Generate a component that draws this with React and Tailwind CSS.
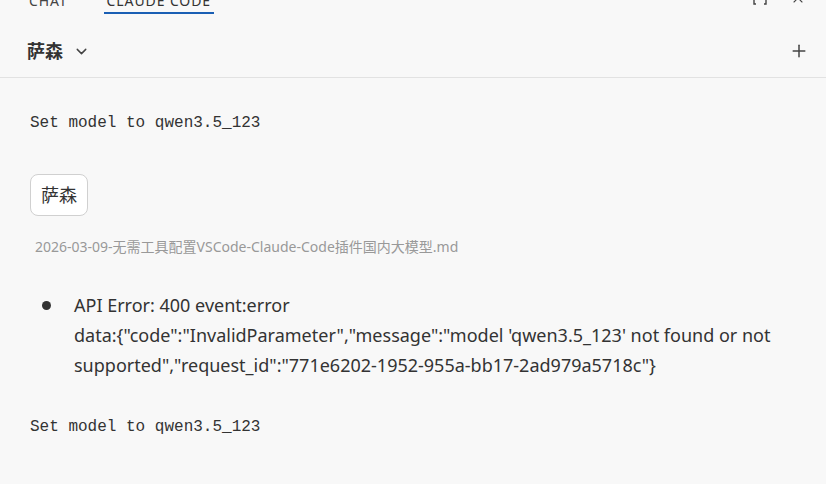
import React from 'react'
import { ChevronDown, Plus, X } from 'lucide-react'

const mono = { fontFamily: '"Liberation Mono", "DejaVu Sans Mono", monospace' }

const Expand = () => (
  <svg width="16" height="16" viewBox="0 0 16 16" fill="none" stroke="currentColor" strokeWidth="1.4">
    <path d="M4 2H2v12h2M12 2h2v12h-2" />
  </svg>
)

export default function App() {
  return (
    <div
      className="h-[484px] w-[826px] overflow-hidden bg-[#f8f8f8] text-[#333]"
      style={{ fontFamily: '"Noto Sans", "Noto Sans CJK SC", sans-serif' }}
    >
      <div className="-mt-[12px] flex h-[26px] items-end justify-between pl-[29px] pr-[20px]">
        <div className="flex items-end gap-[36px] text-[14px] tracking-[0.9px]">
          <span className="pb-[4px] leading-[18px] text-[#444]">CHAT</span>
          <span className="border-b-2 border-[#1a5fb4] px-[3px] pb-[2px] leading-[18px] text-[#333]">CLAUDE CODE</span>
        </div>
        <div className="flex items-center gap-[22px] pb-[8px] text-[#444]">
          <Expand />
          <X size={16} strokeWidth={1.6} />
        </div>
      </div>

      <div className="flex h-[64px] items-center justify-between border-b border-[#e2e2e2] pl-[27px] pr-[17px] pt-[11px]">
        <div className="flex items-center gap-[10px]">
          <span className="text-[18px] font-semibold text-[#333]">萨森</span>
          <ChevronDown size={17} strokeWidth={2} className="text-[#444]" />
        </div>
        <Plus size={20} strokeWidth={1.8} className="text-[#444]" />
      </div>

      <div className="px-[30px]">
        <div className="mt-[33px] text-[16px] leading-[24px] text-[#333]" style={mono}>
          Set model to qwen3.5_123
        </div>

        <div className="mt-[39px] inline-flex h-[42px] items-center rounded-[8px] border border-[#d0d0d0] bg-white px-[10px] text-[18px] text-[#333]">
          萨森
        </div>

        <div className="mt-[21px] pl-[5px] text-[14px] leading-[20px] text-[#999]">
          2026-03-09-无需工具配置VSCode-Claude-Code插件国内大模型.md
        </div>

        <div className="mt-[33px] flex items-start">
          <div className="flex h-[30px] w-[44px] shrink-0 items-center pl-[12px]">
            <span className="h-[9px] w-[9px] rounded-full bg-[#333]" />
          </div>
          <div className="pr-[10px] text-[18px] leading-[30px] text-[#333]">
            API Error: 400 event:error
            <br />
            data:{'{'}"code":"InvalidParameter","message":"model 'qwen3.5_123' not found or not supported","request_id":"771e6202-1952-955a-bb17-2ad979a5718c"{'}'}
          </div>
        </div>

        <div className="mt-[35px] text-[16px] leading-[24px] text-[#333]" style={mono}>
          Set model to qwen3.5_123
        </div>
      </div>
    </div>
  )
}
